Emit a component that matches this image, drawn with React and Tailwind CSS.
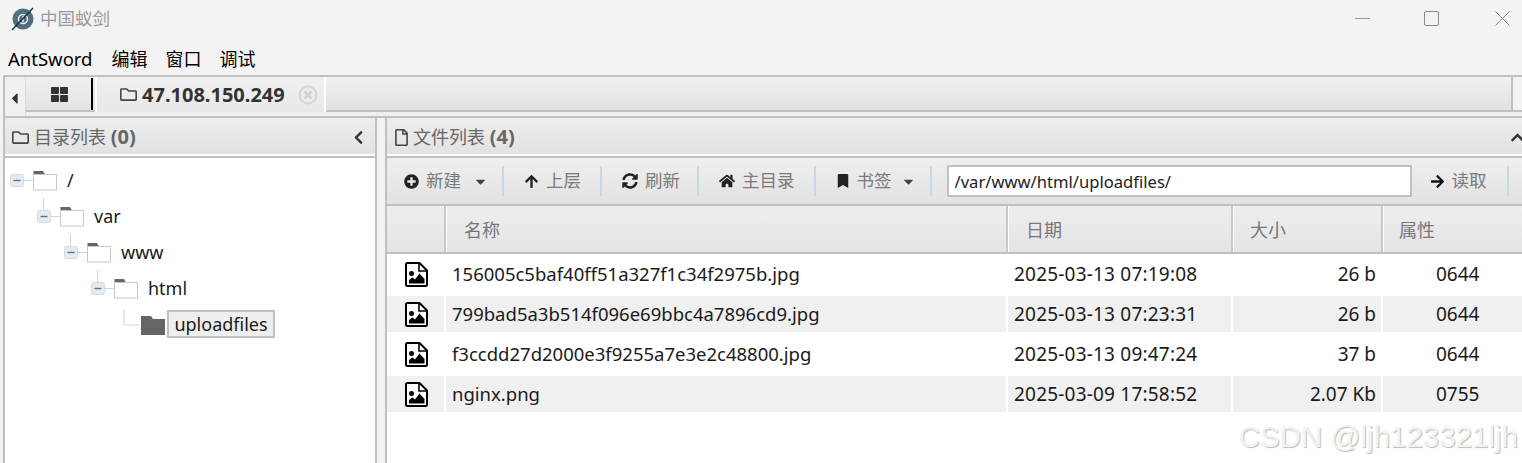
import { FaThLarge, FaRegFolder, FaRegFile, FaPlusCircle, FaArrowUp, FaSyncAlt, FaHome, FaBookmark, FaArrowRight, FaChevronLeft, FaChevronUp, FaCaretDown, FaCaretLeft } from "react-icons/fa";

const files = [
  { name: "156005c5baf40ff51a327f1c34f2975b.jpg", date: "2025-03-13 07:19:08", size: "26 b", attr: "0644" },
  { name: "799bad5a3b514f096e69bbc4a7896cd9.jpg", date: "2025-03-13 07:23:31", size: "26 b", attr: "0644" },
  { name: "f3ccdd27d2000e3f9255a7e3e2c48800.jpg", date: "2025-03-13 09:47:24", size: "37 b", attr: "0644" },
  { name: "nginx.png", date: "2025-03-09 17:58:52", size: "2.07 Kb", attr: "0755" },
];

const tree = [
  { name: "/", indent: "pl-[5px]", root: true },
  { name: "var", indent: "pl-[32px]" },
  { name: "www", indent: "pl-[59px]" },
  { name: "html", indent: "pl-[86px]" },
];

function Logo() {
  return (
    <svg width="26" height="26" viewBox="0 0 26 26" className="shrink-0">
      <circle cx="13" cy="13" r="10.5" fill="#4f6f7e" />
      <circle cx="13" cy="13" r="4.5" fill="none" stroke="#e8eef0" strokeWidth="1.5" />
      <path d="M13 10v6" stroke="#e8eef0" strokeWidth="1.5" />
      <path d="M2 24L23 2" stroke="#20292e" strokeWidth="1.4" />
    </svg>
  );
}

function TreeGlyph({ root }) {
  return (
    <svg width="47" height="36" viewBox="0 0 47 36" className="shrink-0">
      {!root && <path d="M6.5 0V12" stroke="#d4d4d4" />}
      <path d="M14 18.5H23" stroke="#d4d4d4" />
      <rect x="0.5" y="12.5" width="13" height="12" rx="2" fill="#e4eaf0" stroke="#d4dae0" />
      <path d="M3.5 18.5H10.5" stroke="#5f7488" strokeWidth="1.4" />
      <path d="M23.5 12.5V9H33L35 12.5Z" fill="#666" />
      <rect x="23.5" y="12.5" width="23" height="15.5" fill="#fff" stroke="#c8c8c8" />
    </svg>
  );
}

function ImageFileIcon() {
  return (
    <svg width="23" height="25" viewBox="0 0 23 25" className="shrink-0">
      <path d="M2.5 1H14.5L22 8.5V22.5A1.5 1.5 0 0 1 20.5 24H2.5A1.5 1.5 0 0 1 1 22.5V2.5A1.5 1.5 0 0 1 2.5 1Z" fill="#fff" stroke="#000" strokeWidth="2" />
      <path d="M14 1V9H22" fill="none" stroke="#000" strokeWidth="1.6" />
      <circle cx="6.5" cy="11.5" r="2.5" fill="#000" />
      <path d="M4 21.5V18L7.5 15.5L10 17.5L14.5 11.5L19.5 17V21.5Z" fill="#000" />
    </svg>
  );
}

function TabClose() {
  return (
    <svg width="20" height="20" viewBox="0 0 20 20" className="ml-[13px] shrink-0">
      <circle cx="10" cy="10" r="8.5" fill="#ececec" stroke="#d4d4d4" strokeWidth="2.2" />
      <path d="M6.5 6.5L13.5 13.5M13.5 6.5L6.5 13.5" stroke="#d0d0d0" strokeWidth="2.6" />
    </svg>
  );
}

function Sep({ className }) {
  return <div className={"w-[2px] h-[30px] bg-[#c8d8e0] shrink-0 " + className} />;
}

function Tool({ icon, label, className }) {
  return (
    <div className={"flex items-center shrink-0 " + className}>
      {icon}
      <span className="ml-[7px] text-[#7a7a7a] text-[17.5px] leading-none">{label}</span>
    </div>
  );
}

export default function App() {
  return (
    <div className="relative w-[1522px] h-[463px] overflow-hidden bg-[#f3f3f3] text-[#1a1a1a] font-['Noto_Sans','Noto_Sans_CJK_SC',sans-serif]">
      <div className="h-[37px] flex items-center pl-[10px]">
        <Logo />
        <span className="ml-[4px] text-[17.5px] text-[#999]">中国蚁剑</span>
        <div className="ml-auto flex items-center">
          <div className="w-[15px] h-px bg-[#999]" />
          <div className="ml-[54px] w-[15px] h-[15px] border border-[#8a8a8a] rounded-[2px]" />
          <svg width="15" height="15" viewBox="0 0 15 15" className="ml-[56px] mr-[12px]"><path d="M0.5 0.5L14.5 14.5M14.5 0.5L0.5 14.5" stroke="#8a8a8a" /></svg>
        </div>
      </div>
      <div className="h-[38px] flex items-center pl-[8px] text-[18px] text-black pt-[6px]">
        <span className="text-[18.5px]">AntSword</span>
        <span className="ml-[19px]">编辑</span>
        <span className="ml-[18px]">窗口</span>
        <span className="ml-[18px]">调试</span>
      </div>

      {/* tab bar */}
      <div className="ml-[3px] h-[43px] border-t-2 border-b-2 border-l-2 border-[#c0c0c0] flex bg-[#f0f0f0]">
        <div className="w-[21px] flex items-center justify-center border-r border-[#ddd] pt-[3px] pr-[2px]">
          <FaCaretLeft className="text-[#333] text-[17px]" />
        </div>
        <div className="flex-1 flex h-[35px] border-b-2 border-[#c0c0c0] bg-gradient-to-b from-[#f0f0f0] to-[#e2e2e2] items-stretch">
          <div className="w-[66px] ml-[1px] mt-[1px] flex items-center justify-center border-r-2 border-black bg-gradient-to-b from-[#efefef] to-[#e4e4e4]">
            <FaThLarge className="text-[#333] text-[17px]" />
          </div>
          <div className="ml-[2px] w-[231px] h-[35px] border-x-2 border-white flex items-center bg-gradient-to-b from-[#f0f0f0] to-[#e8e8e8]">
            <FaRegFolder className="ml-[23px] text-[#444] text-[17px] shrink-0" />
            <span className="ml-[5px] font-bold text-[20px] text-[#333]">47.108.150.249</span>
            <TabClose />
          </div>
          <div className="ml-auto w-[11px] border-l-2 border-[#c0c0c0] bg-[#f3f3f3]" />
        </div>
      </div>

      <div className="flex h-[345px]">
        {/* directory tree */}
        <div className="ml-[3px] w-[374px] border-x-2 border-[#c0c0c0] bg-white shrink-0">
          <div className="h-[38px] flex items-center border-b-2 border-white bg-gradient-to-b from-[#eeeeee] to-[#e2e2e2] pl-[7px] pr-[9px] text-[#666] text-[18px] pt-[2px]">
            <FaRegFolder className="text-[#444] text-[17px] shrink-0" />
            <span className="ml-[5px]">目录列表 <b className="text-[20px]">(0)</b></span>
            <FaChevronLeft className="ml-auto text-[#333] text-[15px]" />
          </div>
          <div className="border-t-2 border-[#c0c0c0] mt-0 pt-[4px]">
            {tree.map((node) => (
              <div key={node.name} className={"h-[36px] flex items-center text-[18px] " + node.indent}>
                <TreeGlyph root={node.root} />
                <span className="ml-[10px]">{node.name}</span>
              </div>
            ))}
            <div className="h-[36px] flex items-center pl-[117px]">
              <svg width="43" height="30" viewBox="0 0 43 30" className="shrink-0">
                <path d="M2 0V16H17" fill="none" stroke="#d4d4d4" />
                <path d="M19 7H29L31 10H43V26H19Z" fill="#666" />
              </svg>
              <span className="ml-[2px] h-[28px] w-[108px] flex items-center justify-center border-2 border-[#c0c0c0] bg-[#eeeeee] text-[18px]">uploadfiles</span>
            </div>
          </div>
        </div>

        {/* file list */}
        <div className="ml-[8px] flex-1 min-w-0 border-l-2 border-[#c0c0c0] bg-white">
          <div className="h-[38px] flex items-center border-b-2 border-white bg-gradient-to-b from-[#eeeeee] to-[#e2e2e2] pl-[6px] text-[#666] text-[18px] pt-[2px]">
            <FaRegFile className="text-[#444] text-[17px] shrink-0" />
            <span className="ml-[3px]">文件列表 <b className="text-[20px]">(4)</b></span>
            <FaChevronUp className="ml-auto -mr-[3px] text-[#333] text-[15px]" />
          </div>
          <div className="h-[50px] flex items-center border-y-2 border-[#c0c0c0] bg-gradient-to-b from-[#efefef] to-[#e2e2e2] pl-[17px]">
            <Tool icon={<FaPlusCircle className="text-[#222] text-[15px]" />} label="新建" />
            <FaCaretDown className="ml-[12px] text-[#444] text-[15px]" />
            <Sep className="ml-[14px]" />
            <Tool icon={<FaArrowUp className="text-[#222] text-[15px]" />} label="上层" className="ml-[20px]" />
            <Sep className="ml-[19px]" />
            <Tool icon={<FaSyncAlt className="text-[#222] text-[16px]" />} label="刷新" className="ml-[20px]" />
            <Sep className="ml-[17px]" />
            <Tool icon={<FaHome className="text-[#222] text-[16px]" />} label="主目录" className="ml-[20px]" />
            <Sep className="ml-[19px]" />
            <Tool icon={<FaBookmark className="text-[#222] text-[14px]" />} label="书签" className="ml-[20px]" />
            <FaCaretDown className="ml-[9px] text-[#444] text-[15px]" />
            <Sep className="ml-[14px]" />
            <input readOnly value="/var/www/html/uploadfiles/" className="ml-[15px] w-[465px] h-[32px] border-2 border-[#c0c0c0] bg-white px-[6px] text-[16.6px] text-[#222] outline-none" />
            <Tool icon={<FaArrowRight className="text-[#111] text-[15px]" />} label="读取" className="ml-[18px]" />
            <Sep className="ml-[20px]" />
          </div>
          <div className="h-[48px] grid grid-cols-[59px_562px_225px_150px_1fr] border-b-2 border-[#c0c0c0] text-[#777] text-[18px]">
            <div className="border-r-2 border-[#c8c8c8] bg-gradient-to-b from-[#eeeeee] to-[#e4e4e4]" />
            <div className="border-r-2 border-[#c8c8c8] border-l border-l-white bg-gradient-to-b from-[#eeeeee] to-[#e4e4e4] flex items-center pl-[17px] pt-[2px]">名称</div>
            <div className="border-r-2 border-[#c8c8c8] border-l border-l-white bg-gradient-to-b from-[#eeeeee] to-[#e4e4e4] flex items-center pl-[17px] pt-[2px]">日期</div>
            <div className="border-r-2 border-[#c8c8c8] border-l border-l-white bg-gradient-to-b from-[#eeeeee] to-[#e4e4e4] flex items-center pl-[16px] pt-[2px]">大小</div>
            <div className="border-l border-l-white bg-gradient-to-b from-[#eeeeee] to-[#e4e4e4] flex items-center pl-[15px] pt-[2px]">属性</div>
          </div>
          {files.map((file, i) => {
            const bg = i % 2 === 1 ? "bg-[#f0f0f0] " : "";
            return (
              <div key={file.name} className="h-[40px] py-[2px] grid grid-cols-[59px_562px_225px_150px_1fr] text-[18.5px] text-[#1a1a1a]">
                <div className={bg + "border-r-2 border-white flex items-center pl-[18px]"}>
                  <ImageFileIcon />
                </div>
                <div className={bg + "border-r-2 border-white flex items-center pl-[6px]"}>{file.name}</div>
                <div className={bg + "border-r-2 border-white flex items-center pl-[6px] text-[19px] tracking-[0.2px]"}>{file.date}</div>
                <div className={bg + "border-r-2 border-white flex items-center justify-end pr-[5px] text-[19px]"}>{file.size}</div>
                <div className={bg + "flex items-center pl-[53px] text-[19px]"}>{file.attr}</div>
              </div>
            );
          })}
        </div>
      </div>

      {/* watermark */}
      <div className="absolute right-[4px] bottom-[12px] text-[#f2f2f2] text-[29.5px] leading-none font-['Liberation_Sans',sans-serif] [text-shadow:1px_1px_1px_#bbb]">CSDN @ljh123321ljh</div>
    </div>
  );
}
